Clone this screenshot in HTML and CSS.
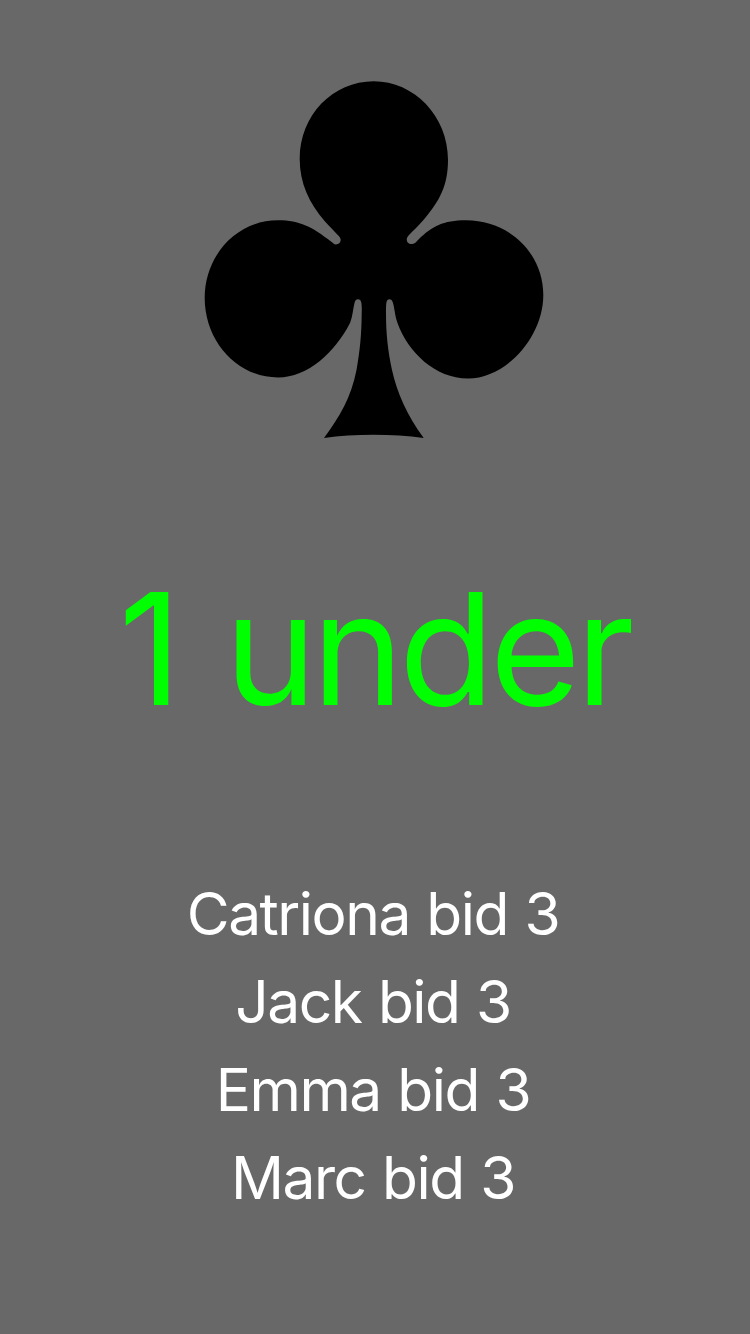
FILE: index.html
```html
<!DOCTYPE html>
<html lang="en">
<head>
<meta charset="utf-8">
<title>Bidding summary</title>
<link rel="stylesheet" href="styles.css">
</head>
<body>
<main class="screen">
  <svg class="suit" viewBox="200 76 348 368" role="img" aria-label="Clubs">
    <path d="M373.700 81.300C414 81.300 448 116 448 160C448 185 440 201 423 220.500C418 226 413.500 230.500 409 235C404.500 239.500 407.500 244 411 244C415 244 415.500 242.500 418.500 239.500C432 226.500 443 220.300 466 220.300C510 220.300 543.300 254 543.300 295C543.300 337 506 378.500 468 378.500C435 378.500 408 352 397.500 323C395 316 394.500 308 393 303C392.200 300 391 299.200 389.500 299.200C386 299.200 386 303 386 314C386 334 388 352 392 370C397 393 407 415 423.700 438Q400 434.800 373.500 434.800Q347 434.800 324 438C340 416 351 398 356.500 370C360 350 361.500 335 361.700 313C362 303 361.500 299.200 358 299.200C356 299.200 355 300.500 354.500 303C353 309 352.500 317 350 323C335 352 308 377.500 278 377.500C237 377.500 204.700 341 204.700 298C204.700 256 236 220.300 278 220.300C300 220.300 312 227 331 241.500C333 243 334 244.500 336 244.500C340 244.500 342.500 240 339 236.300C335 232 330 227 325 221.500C309 203 299.700 183 299.700 159C299.700 115 333 81.300 373.700 81.300Z"/>
  </svg>
  <h1 class="result">1 under</h1>
  <ul class="bids">
    <li class="bid">Catriona bid 3</li>
    <li class="bid">Jack bid 3</li>
    <li class="bid">Emma bid 3</li>
    <li class="bid">Marc bid 3</li>
  </ul>
</main>
</body>
</html>
```
FILE: styles.css
```css
body {
  margin: 0;
  background: #686868;
  font-family: Inter, "Liberation Sans", sans-serif;
}

.screen {
  box-sizing: border-box;
  height: 1334px;
  padding-top: 76px;
  display: flex;
  flex-direction: column;
  align-items: center;
  overflow: hidden;
}

.suit {
  flex: none;
  width: 348px;
  height: 368px;
  margin-right: 2px;
}

.result {
  margin: 105px 2px 0 0;
  color: #00ff00;
  font-size: 156px;
  font-weight: 400;
  line-height: 200px;
  letter-spacing: -4.9px;
  word-spacing: 8.5px;
  white-space: nowrap;
}

.bids {
  margin: 121px 4px 0 0;
  padding: 0;
  list-style: none;
  color: #fff;
  font-size: 58.7px;
  line-height: 88px;
  letter-spacing: -1.5px;
  word-spacing: 1.5px;
  text-align: center;
}

.bid {
  white-space: nowrap;
}
```
